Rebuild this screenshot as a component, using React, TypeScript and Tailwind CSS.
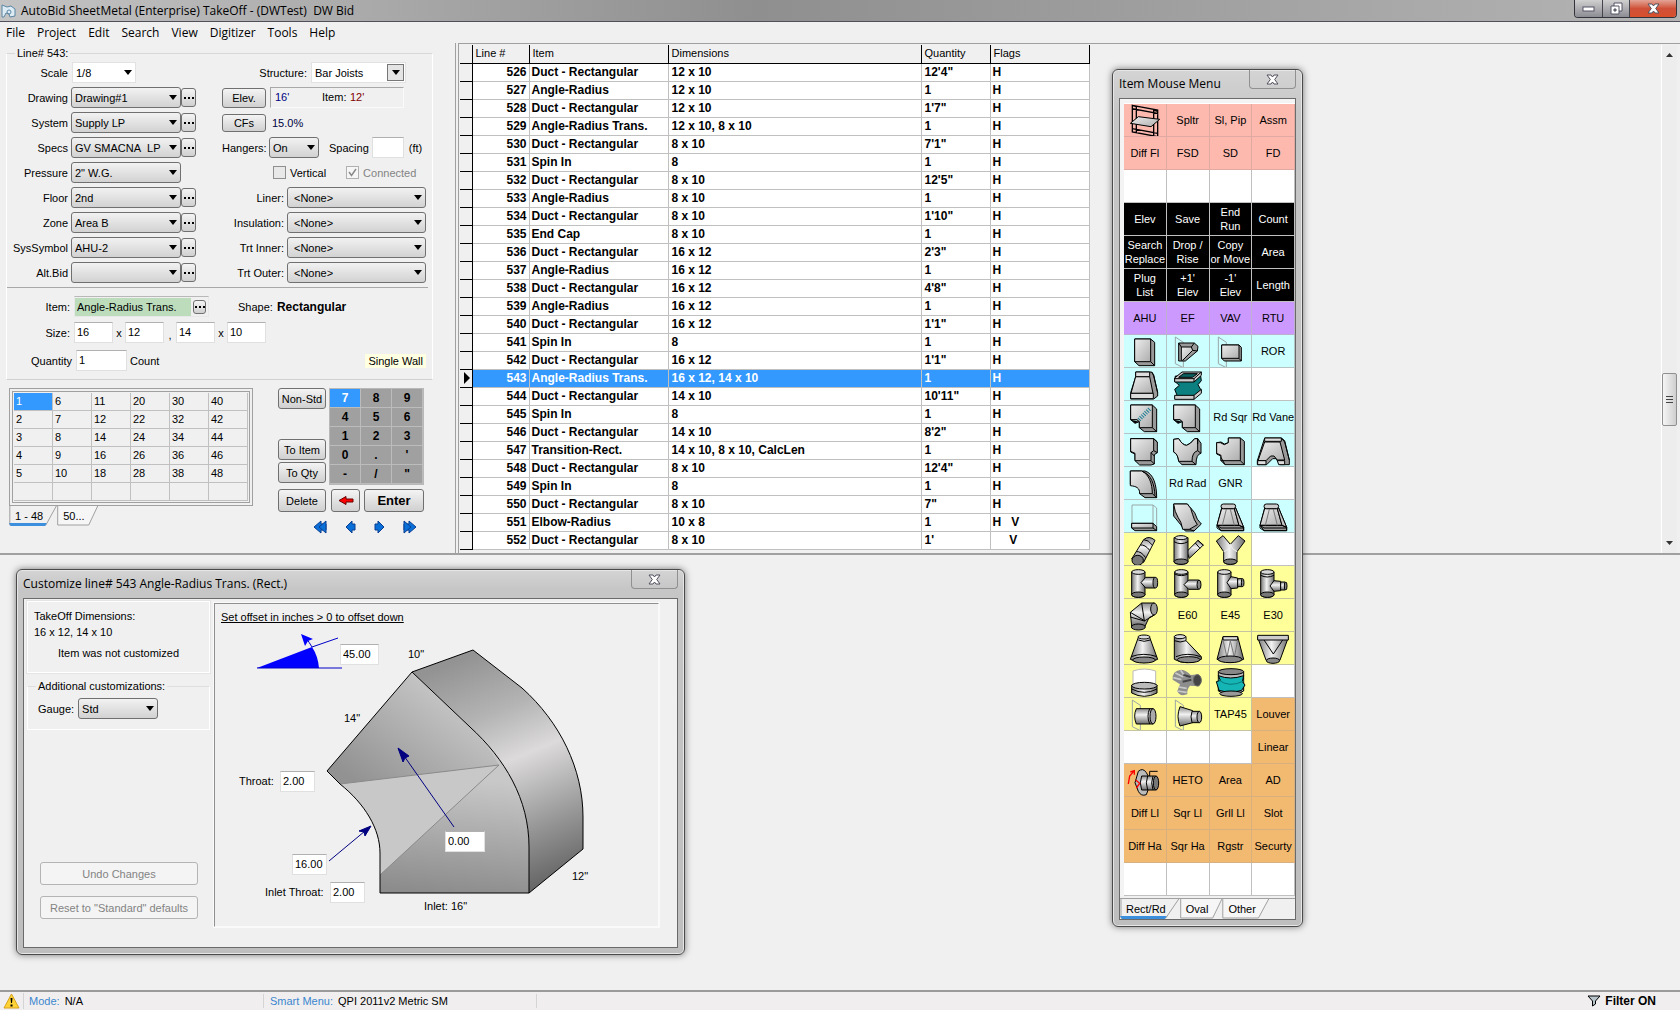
import { useState } from 'react';
import type { ReactNode } from 'react';
import clsx from 'clsx';

const menus = ['File', 'Project', 'Edit', 'Search', 'View', 'Digitizer', 'Tools', 'Help'];

const leftFields = [
  { id: 'drawing', label: 'Drawing', value: 'Drawing#1', more: true },
  { id: 'system', label: 'System', value: 'Supply LP', more: true },
  { id: 'specs', label: 'Specs', value: 'GV SMACNA\u00a0 LP', more: true },
  { id: 'pressure', label: 'Pressure', value: '2" W.G.', more: false },
  { id: 'floor', label: 'Floor', value: '2nd', more: true },
  { id: 'zone', label: 'Zone', value: 'Area B', more: true },
  { id: 'syssymbol', label: 'SysSymbol', value: 'AHU-2', more: true },
  { id: 'altbid', label: 'Alt.Bid', value: '', more: true },
];

const rightFields = [
  { id: 'liner', label: 'Liner:' },
  { id: 'insulation', label: 'Insulation:' },
  { id: 'trt-inner', label: 'Trt Inner:' },
  { id: 'trt-outer', label: 'Trt Outer:' },
];

const DUCT = 'Duct - Rectangular';

const rows: [number, string, string, string, string][] = [
  [526, DUCT, '12 x 10', `12'4"`, 'H'],
  [527, 'Angle-Radius', '12 x 10', '1', 'H'],
  [528, DUCT, '12 x 10', `1'7"`, 'H'],
  [529, 'Angle-Radius Trans.', '12 x 10, 8 x 10', '1', 'H'],
  [530, DUCT, '8 x 10', `7'1"`, 'H'],
  [531, 'Spin In', '8', '1', 'H'],
  [532, DUCT, '8 x 10', `12'5"`, 'H'],
  [533, 'Angle-Radius', '8 x 10', '1', 'H'],
  [534, DUCT, '8 x 10', `1'10"`, 'H'],
  [535, 'End Cap', '8 x 10', '1', 'H'],
  [536, DUCT, '16 x 12', `2'3"`, 'H'],
  [537, 'Angle-Radius', '16 x 12', '1', 'H'],
  [538, DUCT, '16 x 12', `4'8"`, 'H'],
  [539, 'Angle-Radius', '16 x 12', '1', 'H'],
  [540, DUCT, '16 x 12', `1'1"`, 'H'],
  [541, 'Spin In', '8', '1', 'H'],
  [542, DUCT, '16 x 12', `1'1"`, 'H'],
  [543, 'Angle-Radius Trans.', '16 x 12, 14 x 10', '1', 'H'],
  [544, DUCT, '14 x 10', `10'11"`, 'H'],
  [545, 'Spin In', '8', '1', 'H'],
  [546, DUCT, '14 x 10', `8'2"`, 'H'],
  [547, 'Transition-Rect.', '14 x 10, 8 x 10, CalcLen', '1', 'H'],
  [548, DUCT, '8 x 10', `12'4"`, 'H'],
  [549, 'Spin In', '8', '1', 'H'],
  [550, DUCT, '8 x 10', '7"', 'H'],
  [551, 'Elbow-Radius', '10 x 8', '1', 'H   V'],
  [552, DUCT, '8 x 10', `1'`, '     V'],
];

const sizes = [
  ['1', '6', '11', '20', '30', '40'],
  ['2', '7', '12', '22', '32', '42'],
  ['3', '8', '14', '24', '34', '44'],
  ['4', '9', '16', '26', '36', '46'],
  ['5', '10', '18', '28', '38', '48'],
  ['', '', '', '', '', ''],
];

const keys = ['7', '8', '9', '4', '5', '6', '1', '2', '3', '0', '.', "'", '-', '/', '"'];

/* ---------- fitting icons, drawn on a 129 x 99 cell ---------- */

const G = 'url(#sheet)';
const R = 'url(#round)';
const H = 'url(#roundH)';
const D = '#999999';

const pane = <path d="M28 6L52 22V98L28 86Z" fill="none" stroke="#9aa5a5" />;
const tee = (
  <>
    <path d="M26 18V86A20 8 0 0 0 66 86V18Z" fill={R} />
    <ellipse cx="46" cy="18" rx="20" ry="7" fill="#d8d8d8" />
    <ellipse cx="46" cy="86" rx="20" ry="8" fill="#777" />
  </>
);
const sqToRound = (
  <>
    <path d="M38 24L24 76L36 92H104V82L80 24Z" fill={D} />
    <path d="M38 26L24 76H90L76 26Z" fill={G} />
    <path d="M76 26L90 76L104 82L80 24Z" fill="#c4c4c4" />
    <path d="M24 76V84L36 92H104V82L90 76H24L36 84H104" fill="none" />
    <path d="M52 28L40 76M64 28L76 76" fill="none" stroke="#777" />
    <rect x="36" y="12" width="44" height="14" rx="7" fill="#ccc" />
  </>
);
const elbow = (
  <>
    <path d="M23 12H88L101 24V92H64L49 80V62L42 56H23Z" fill={D} />
    <path d="M23 12H88V80H49V62L42 56H23Z" fill={G} />
    <path d="M88 80L101 92M23 56L36 67L49 62" />
  </>
);

const icons: Record<string, ReactNode> = {
  damper: (
    <>
      <path d="M28 4L40 8V86L28 84ZM92 18L104 22V98L92 96ZM28 4L104 18V28L28 14ZM28 74L104 88V98L28 84Z" fill="#fbb8ae" strokeWidth="4" />
      <path d="M22 58L46 38L110 46L84 68Z" fill={G} />
    </>
  ),
  duct: (
    <>
      <path d="M35 12H83L95 22V92H48L35 80Z" fill={D} />
      <path d="M35 12H83V80H35Z" fill={G} />
      <path d="M83 80L95 92" />
    </>
  ),
  boot: (
    <>
      {pane}
      <path d="M38 24H85L96 34L94 48L58 78H38Z" fill={D} />
      <path d="M46 36H76L80 46L50 76H46Z" fill={G} />
      <path d="M38 24L46 36M85 24L76 36M80 46L94 48" />
    </>
  ),
  tapBox: (
    <>
      {pane}
      <path d="M38 30H90L97 37V78H46L38 70Z" fill={D} />
      <path d="M38 30H90V70H38Z" fill={G} />
      <path d="M90 70L97 78" />
    </>
  ),
  transition: (
    <>
      <path d="M38 12H86L92 20L104 74V84L92 93H23V74L38 26Z" fill={D} />
      <path d="M38 26L24 76H90L80 26Z" fill={G} />
      <path d="M38 12H80V26H38ZM23 76H91V92H23Z" fill="#ddd" />
      <path d="M86 12L92 24L104 74" fill="none" />
    </>
  ),
  flexSquare: (
    <>
      <path d="M26 40L40 52L26 64L34 84H84L106 68L96 50L106 38L104 24H28Z" fill="#0c8080" />
      <path d="M26 30L48 12H106V22L84 42H26Z" fill="#ccc" />
      <path d="M38 28L52 17H94L80 28Z" fill="#0a6262" />
      <path d="M26 32H84V42M84 32L106 12" fill="none" />
      <path d="M26 82H84L106 64V76L84 94H26Z" fill="#ccc" />
      <path d="M84 82V94" />
    </>
  ),
  elbowVaned: (
    <>
      {elbow}
      <path d="M48 56L80 24" stroke="#1d7f95" strokeWidth="13" strokeDasharray="3 4" />
    </>
  ),
  elbowSquare: elbow,
  teeSquare: (
    <>
      <path d="M23 14H92L103 24V56L94 62V90L84 93H50L36 80V60L23 54Z" fill={D} />
      <path d="M23 14H92V50L84 56V80H36V58L23 52Z" fill={G} />
      <path d="M92 14L103 24M84 80L94 90M92 50L103 56M84 56L94 66" />
    </>
  ),
  yBranch: (
    <>
      <path d="M23 16L38 14Q50 34 62 34Q74 30 86 14H95L105 28V58Q90 60 90 92H48L38 82Q36 60 23 54Z" fill={D} />
      <path d="M23 16L38 14Q50 34 62 34Q74 30 86 14H95V50Q78 54 78 82H38Q36 60 23 54Z" fill={G} />
      <path d="M78 82L90 92M95 50L105 58M95 14V30" />
    </>
  ),
  stepTee: (
    <>
      <path d="M23 26L36 24L46 30L58 26V12H94L106 22V92H48L36 80V66L23 60Z" fill={D} />
      <path d="M23 26H34L46 32L58 26V12H94V80H36V64L23 58Z" fill={G} />
      <path d="M94 80L106 92M36 70L48 92" />
    </>
  ),
  pants: (
    <>
      <path d="M38 12H88L98 20L112 78V92H84L72 74H62L44 92H16V80Z" fill={D} />
      <path d="M38 24H84L98 78H76L66 66H56L42 80H18Z" fill={G} />
      <path d="M38 12H88V22H38ZM17 80H42V92H17ZM76 80H98V92H80Z" fill="#ddd" />
      <path d="M88 12L98 24L112 78" fill="none" />
    </>
  ),
  radius: (
    <>
      <path d="M22 12H66C92 20 101 54 101 92H66L50 80V62L22 52Z" fill={D} />
      <path d="M22 12H56C78 22 88 50 88 80H50C50 62 40 58 22 56Z" fill={G} />
      <path d="M88 80L101 92M60 14C84 24 94 50 96 86" fill="none" />
    </>
  ),
  endCap: (
    <>
      <path d="M27 70V15H90L101 24V80M90 15V70" fill="none" stroke="#9aa5a5" />
      <path d="M26 70H90L101 80V92H36L26 84Z" fill={D} />
      <path d="M26 70H90V84H26Z" fill={G} />
      <path d="M90 84L101 92" />
    </>
  ),
  angle: (
    <>
      <path d="M23 12H64L86 38Q92 60 106 72L84 93H58L44 74L23 48Z" fill={D} />
      <path d="M23 12H64Q76 22 80 44Q84 60 94 74L70 88H50Q46 64 36 52Q26 36 23 12Z" fill={G} />
      <path d="M70 88L84 93" />
    </>
  ),
  sqRoundA: sqToRound,
  sqRoundB: sqToRound,
  pipe: (
    <>
      <path d="M26 78L62 20Q78 6 96 22L62 88Z" fill={H} />
      <ellipse cx="44" cy="82" rx="17" ry="15" fill="#777" />
      <path d="M40 56Q54 54 68 74M52 36Q66 34 80 52M62 20Q76 20 88 36" fill="none" />
    </>
  ),
  lateral: (
    <>
      <path d="M62 56L96 22L112 36L70 76Z" fill={H} />
      <path d="M88 30L102 46M96 22L112 38" />
      <path d="M24 14V86A21 8 0 0 0 66 86V14Z" fill={R} />
      <ellipse cx="45" cy="14" rx="18" ry="6" fill="#ddd" />
      <path d="M24 26Q45 38 66 26" fill="none" />
      <ellipse cx="45" cy="86" rx="21" ry="8" fill="#777" />
    </>
  ),
  wye: (
    <>
      <path d="M22 24L42 8L64 34L88 8L108 24L84 56V86A20 8 0 0 1 44 86V56Z" fill={R} />
      <path d="M44 56Q62 50 64 34Q68 50 84 56" fill="none" stroke="#eee" />
      <ellipse cx="64" cy="86" rx="20" ry="8" fill="#777" />
    </>
  ),
  teeRound: (
    <>
      {tee}
      <path d="M54 50L68 34H96V66H68Z" fill={H} />
      <ellipse cx="97" cy="50" rx="7" ry="16" fill="#888" />
    </>
  ),
  teeCap: (
    <>
      {tee}
      <path d="M26 24Q46 34 66 24" fill="none" />
      <path d="M54 56L68 42H98V70H68Z" fill={H} />
      <ellipse cx="99" cy="56" rx="6" ry="14" fill="#888" />
    </>
  ),
  teeReduce: (
    <>
      {tee}
      <path d="M54 50L66 32L86 36V66L66 68Z" fill={H} />
      <path d="M86 38H100V62H86Z" fill={H} />
      <ellipse cx="101" cy="50" rx="4" ry="12" fill="#888" />
    </>
  ),
  teeReduceCap: (
    <>
      {tee}
      <path d="M26 28Q46 38 66 28" fill="none" />
      <path d="M54 60L66 44L86 46V74L66 76Z" fill={H} />
      <path d="M86 48H100V72H86Z" fill={H} />
      <ellipse cx="101" cy="60" rx="4" ry="12" fill="#888" />
    </>
  ),
  elbowRound: (
    <>
      <path d="M22 40L56 12H94V48L78 56L66 82H26Z" fill={H} />
      <path d="M22 40L66 66M22 54L64 66L56 12M64 66L94 48" fill="none" />
      <ellipse cx="93" cy="30" rx="10" ry="18" fill="#999" />
      <ellipse cx="46" cy="84" rx="21" ry="9" fill="#777" />
    </>
  ),
  cone: (
    <>
      <path d="M46 16L22 82Q62 102 104 82L80 16Z" fill={R} />
      <ellipse cx="63" cy="15" rx="18" ry="6" fill="#ddd" />
      <path d="M46 24Q63 32 82 24M24 74Q62 60 102 74" fill="none" />
      <ellipse cx="63" cy="84" rx="34" ry="9" fill="#888" />
    </>
  ),
  coneOffset: (
    <>
      <path d="M25 14V82Q60 102 106 82V74L60 26V14Z" fill={R} />
      <ellipse cx="42" cy="14" rx="17" ry="6" fill="#ddd" />
      <path d="M25 26Q42 34 60 26M30 74Q64 60 104 74" fill="none" />
      <ellipse cx="68" cy="83" rx="34" ry="9" fill="#888" />
    </>
  ),
  coneFacet: (
    <>
      <path d="M42 14H86L104 82Q62 100 24 82Z" fill={R} />
      <path d="M42 14H86V24H42Z" fill="#ddd" />
      <path d="M42 24L54 76L64 26L76 76L86 24" fill="none" stroke="#777" />
      <ellipse cx="63" cy="82" rx="36" ry="10" fill="#888" />
    </>
  ),
  coneDown: (
    <>
      <path d="M17 16L22 30L42 84Q62 100 84 84L104 30L109 16Z" fill={R} />
      <path d="M17 10H109V24H17Z" fill="#ccc" />
      <path d="M36 24L64 66L92 24" fill="none" />
      <ellipse cx="63" cy="86" rx="20" ry="8" fill="#888" />
    </>
  ),
  capRound: (
    <>
      <path d="M30 60V18Q64 6 98 18V60" fill="#fff" stroke="#bbb" />
      <path d="M26 60V84Q64 104 102 84V60Z" fill={R} />
      <ellipse cx="64" cy="62" rx="38" ry="10" fill="#bbb" />
      <path d="M26 72Q64 92 102 72" fill="none" />
    </>
  ),
  flexElbow: (
    <>
      <path d="M20 44Q18 16 46 14Q62 16 74 30L98 28Q108 44 100 64L72 62Q62 74 64 88Q40 96 34 78L42 58Z" fill="#8d8d8d" stroke="none" />
      <path d="M22 38L46 44M28 24L52 36M44 16L58 36M34 78L62 82M38 66L62 70" stroke="#c9c9c9" strokeWidth="5" />
      <ellipse cx="94" cy="46" rx="12" ry="17" fill="#444" stroke="#666" />
      <path d="M50 50L76 44M52 30L74 36" stroke="#444" strokeWidth="6" />
    </>
  ),
  flexRound: (
    <>
      <path d="M28 20V78Q64 100 104 78V20Z" fill="#bbb" />
      <path d="M28 32Q64 46 104 32L100 50L108 60L98 76Q64 86 30 76L22 50L34 46Z" fill="#16b5b5" />
      <path d="M28 44Q60 70 104 48" fill="none" stroke="#087a7a" />
      <ellipse cx="66" cy="20" rx="38" ry="9" fill="#888" />
      <ellipse cx="66" cy="86" rx="34" ry="8" fill="#999" />
    </>
  ),
  tapRound: (
    <>
      {pane}
      <path d="M40 32H90V78H40Q30 54 40 32Z" fill={H} />
      <ellipse cx="90" cy="55" rx="9" ry="23" fill="#aaa" />
      <path d="M80 32Q70 54 80 78" fill="none" />
    </>
  ),
  tapCone: (
    <>
      {pane}
      <path d="M42 26L80 38V74L42 84Q30 56 42 26Z" fill={H} />
      <path d="M78 40H100V74H78Q72 56 78 40Z" fill={H} />
      <ellipse cx="100" cy="57" rx="7" ry="17" fill="#aaa" />
    </>
  ),
  diffuser: (
    <>
      <path d="M46 22Q60 10 70 26L78 40V70L70 92Q54 98 46 82L36 56Z" fill="#bbb" />
      <path d="M56 36H98V78H56Q48 56 56 36Z" fill={H} />
      <path d="M74 36Q66 56 74 78M90 36Q82 56 90 78" fill="none" />
      <ellipse cx="99" cy="57" rx="8" ry="21" fill="#777" />
      <path d="M80 36V22H104" fill="none" />
      <path d="M16 60L20 36L32 22M22 24L34 20L34 32M38 48L50 58L40 72" fill="none" stroke="red" strokeWidth="4" />
    </>
  ),
};

type Tone = 'p' | 'w' | 'k' | 'v' | 'c' | 'y' | 'o';

const tones: Record<Tone, string> = {
  p: 'bg-[#fdb9ae] border-[#e0aaa2]',
  w: 'bg-white border-[#c0c0c0]',
  k: 'bg-black text-white border-[#c0c0c0]',
  v: 'bg-[#cc99ff] border-[#c0b0d0]',
  c: 'bg-[#ccffff] border-[#b4c4c4]',
  y: 'bg-[#ffff99] border-[#c4c4a0]',
  o: 'bg-[#f2b971] border-[#d8b080]',
};

// "#name" draws an icon, anything else is a caption
const palette: [string, string[]][] = [
  ['pppp', ['#damper', 'Spltr', 'Sl, Pip', 'Assm']],
  ['pppp', ['Diff Fl', 'FSD', 'SD', 'FD']],
  ['wwww', ['', '', '', '']],
  ['kkkk', ['Elev', 'Save', 'End\nRun', 'Count']],
  ['kkkk', ['Search\nReplace', 'Drop /\nRise', 'Copy\nor Move', 'Area']],
  ['kkkk', ['Plug\nList', "+1'\nElev", "-1'\nElev", 'Length']],
  ['vvvv', ['AHU', 'EF', 'VAV', 'RTU']],
  ['cccc', ['#duct', '#boot', '#tapBox', 'ROR']],
  ['ccww', ['#transition', '#flexSquare', '', '']],
  ['cccc', ['#elbowVaned', '#elbowSquare', 'Rd Sqr', 'Rd Vane']],
  ['cccc', ['#teeSquare', '#yBranch', '#stepTee', '#pants']],
  ['cccw', ['#radius', 'Rd Rad', 'GNR', '']],
  ['cccc', ['#endCap', '#angle', '#sqRoundA', '#sqRoundB']],
  ['yyyw', ['#pipe', '#lateral', '#wye', '']],
  ['yyyy', ['#teeRound', '#teeCap', '#teeReduce', '#teeReduceCap']],
  ['yyyy', ['#elbowRound', 'E60', 'E45', 'E30']],
  ['yyyy', ['#cone', '#coneOffset', '#coneFacet', '#coneDown']],
  ['yyyw', ['#capRound', '#flexElbow', '#flexRound', '']],
  ['yyyo', ['#tapRound', '#tapCone', 'TAP45', 'Louver']],
  ['wwwo', ['', '', '', 'Linear']],
  ['oooo', ['#diffuser', 'HETO', 'Area', 'AD']],
  ['oooo', ['Diff Ll', 'Sqr Ll', 'Grll Ll', 'Slot']],
  ['oooo', ['Diff Ha', 'Sqr Ha', 'Rgstr', 'Securty']],
  ['wwww', ['', '', '', '']],
];

function Caret({ className }: { className?: string }) {
  return (
    <svg viewBox="0 0 8 5" className={clsx('h-[5px] w-2', className)} aria-hidden>
      <path d="M0 0H8L4 5Z" fill="#000" />
    </svg>
  );
}

interface ComboProps {
  id: string;
  value: string;
  className?: string;
  flat?: boolean;
  boxed?: boolean;
  indent?: boolean;
}

function Combo({ id, value, className, flat, boxed, indent }: ComboProps) {
  return (
    <span className={clsx('relative block h-[21px]', className)}>
      <select
        id={id}
        defaultValue={value}
        className={clsx(
          'block h-full w-full appearance-none whitespace-pre pr-4 outline-none',
          indent ? 'pl-1.5' : 'pl-[3px]',
          flat
            ? 'border border-[#e2e2e2] bg-white'
            : 'rounded-[3px] border border-[#707070] bg-linear-to-b from-[#f2f2f2] to-[#d2d2d2]'
        )}
      >
        <option>{value}</option>
      </select>
      {boxed ? (
        <span className="pointer-events-none absolute top-0.5 right-0.5 flex size-[17px] items-center justify-center border border-[#777] bg-[#e4e4e4]">
          <Caret />
        </span>
      ) : (
        <Caret className="pointer-events-none absolute top-2 right-1" />
      )}
    </span>
  );
}

function PushButton({ className, children, ...rest }: React.ComponentProps<'button'>) {
  return (
    <button
      type="button"
      className={clsx(
        'flex items-center justify-center rounded-[3px] border border-[#707070] bg-linear-to-b from-[#f4f4f4] to-[#d0d0d0] whitespace-nowrap',
        className
      )}
      {...rest}
    >
      {children}
    </button>
  );
}

function MoreButton({ label }: { label: string }) {
  return (
    <PushButton className="h-[19px] w-[15px]" aria-label={label}>
      <svg viewBox="0 0 10 2" className="h-0.5 w-2.5" aria-hidden>
        <path d="M0 0H2V2H0ZM4 0H6V2H4ZM8 0H10V2H8Z" />
      </svg>
    </PushButton>
  );
}

function TextBox({ className, ...rest }: React.ComponentProps<'input'>) {
  return (
    <input
      type="text"
      className={clsx(
        'h-[21px] border border-[#e0e0e0] border-t-[#b0b0b0] bg-white px-0.5 pb-0.5 outline-none',
        className
      )}
      {...rest}
    />
  );
}

function Tab({ children, active }: { children: ReactNode; active?: boolean }) {
  return (
    <button type="button" role="tab" aria-selected={!!active} className="relative h-5 pr-3.5 pl-1.5">
      <svg
        viewBox="0 0 60 20"
        preserveAspectRatio="none"
        className="absolute inset-0 h-full w-full"
        aria-hidden
      >
        <path d="M1 0V19H46L59 0" fill={active ? '#f0f0f0' : '#f6f6f6'} stroke="#a0a0a0" vectorEffect="non-scaling-stroke" />
        {active && <path d="M0 17H47L45 20H2Z" fill="#3b8fdd" />}
      </svg>
      <span className="relative">{children}</span>
    </button>
  );
}

function TitleBar() {
  return (
    <header className="flex h-[22px] shrink-0 items-center border-b border-[#50505a] bg-linear-to-r from-[#c4c4c4] via-[#8f8f8f] via-45% to-[#b4b4b4] pl-px font-['Open_Sans',sans-serif] text-xs">
      <svg viewBox="0 0 16 16" className="mr-1 size-4" aria-hidden>
        <path d="M1 2L6 4L10 3L14 6V13L9 14L8 11L5 10L3 14H1Z" fill="#dcebf4" stroke="#5c86a2" />
        <circle cx="8" cy="9" r="2" fill="none" stroke="#5c86a2" />
      </svg>
      <h1 className="whitespace-pre">AutoBid SheetMetal (Enterprise) TakeOff - (DWTest)  DW Bid</h1>
      <div className="mr-[3px] ml-auto flex h-[18px] self-start overflow-hidden rounded-b border border-t-0 border-[#33333c]">
        <button type="button" aria-label="Minimize" className="flex w-7 items-center justify-center border-r border-[#44444c] bg-linear-to-b from-[#d0d0d0] to-[#8c8c94]">
          <svg viewBox="0 0 13 6" className="h-1.5 w-[13px]"><rect x="1" y="1" width="11" height="4" fill="#fff" stroke="#555566" /></svg>
        </button>
        <button type="button" aria-label="Restore" className="flex w-[27px] items-center justify-center border-r border-[#44444c] bg-linear-to-b from-[#d0d0d0] to-[#8c8c94]">
          <svg viewBox="0 0 13 13" className="size-[13px]" fill="#fff" stroke="#555566">
            <path d="M4 1H12V9H4Z" />
            <path d="M1 4H9V12H1Z" />
            <path d="M4 7H6V9H4Z" fill="#888" />
          </svg>
        </button>
        <button type="button" aria-label="Close" className="flex w-[46px] items-center justify-center bg-linear-to-b from-[#e2a496] via-[#cf5038] to-[#d8502c]">
          <CloseGlyph />
        </button>
      </div>
    </header>
  );
}

function CloseGlyph() {
  return (
    <svg viewBox="0 0 13 11" className="h-[11px] w-[13px]" aria-hidden>
      <path d="M1 1H5L6.5 3L8 1H12L8.7 5.5L12 10H8L6.500 8L5 10H1L4.300 5.500Z" fill="#fff" stroke="#50505e" />
    </svg>
  );
}

function EntryForm() {
  return (
    <fieldset className="mr-[22px] ml-1.5 border border-t-[#d8d8d8] border-white border-b-[#d0d0d0]">
      <legend className="ml-2 h-3.5 px-0.5 leading-[14px]">Line# 543:</legend>
      <div className="flex justify-between pr-1.5">
        <div>
          <div className="flex h-[25px] items-center">
            <label htmlFor="scale" className="mr-1 w-[61px] text-right">Scale</label>
            <Combo id="scale" value="1/8" flat className="w-16" />
          </div>
          {leftFields.map((field) => (
            <div key={field.id} className="flex h-[25px] items-center">
              <label htmlFor={field.id} className="mr-[3px] w-[61px] text-right">{field.label}</label>
              <Combo id={field.id} value={field.value} className="w-[110px]" />
              {field.more && <MoreButton label={`${field.label} list`} />}
            </div>
          ))}
        </div>
        <div className="w-[204px]">
          <div className="flex h-[25px] items-center justify-end pr-5">
            <label htmlFor="structure" className="mr-1">Structure:</label>
            <Combo id="structure" value="Bar Joists" flat boxed className="w-[95px]" />
          </div>
          <div className="flex h-[25px] items-center gap-1">
            <PushButton className="h-5 w-11">Elev.</PushButton>
            <p className="flex h-[21px] w-[134px] border border-[#fafafa] border-t-[#a8a8a8] border-l-[#a8a8a8] pl-1 leading-[18px]">
              <span className="w-[47px] text-[#000080]">16'</span>
              <span className="w-7">Item:</span>
              <span className="text-[#800000]">12'</span>
            </p>
          </div>
          <div className="flex h-[25px] items-center gap-1.5">
            <PushButton className="h-[18px] w-11">CFs</PushButton>
            <span className="text-[#000040]">15.0%</span>
          </div>
          <div className="flex h-[25px] items-center">
            <label htmlFor="hangers" className="mr-[3px] w-11 text-right">Hangers:</label>
            <Combo id="hangers" value="On" className="w-[50px]" />
            <label htmlFor="spacing" className="mr-[3px] ml-2.5">Spacing</label>
            <TextBox id="spacing" className="w-8" />
            <span className="ml-[5px]">(ft)</span>
          </div>
          <div className="flex h-[25px] items-center pl-[51px]">
            <label className="flex items-center gap-1">
              <input type="checkbox" className="size-[13px] appearance-none border border-[#8e8f8f] bg-[#e8e8e8]" />
              Vertical
            </label>
            <label className="relative ml-5 flex items-center gap-1 text-[#838383]">
              <input type="checkbox" disabled defaultChecked className="size-[13px] appearance-none border border-[#b0b0b0] bg-[#f6f6f6]" />
              <svg viewBox="0 0 13 13" className="pointer-events-none absolute left-0 size-[13px]" aria-hidden>
                <path d="M3 6L5.500 9.500L10 3" fill="none" stroke="#8a8a8a" strokeWidth="1.500" />
              </svg>
              Connected
            </label>
          </div>
          {rightFields.map((field) => (
            <div key={field.id} className="flex h-[25px] items-center justify-end">
              <label htmlFor={field.id} className="mr-[3px]">{field.label}</label>
              <Combo id={field.id} value="<None>" indent className="w-[139px]" />
            </div>
          ))}
        </div>
      </div>

      <hr className="mt-0.5 mr-1 border-[#a8a8a8]" />

      <div className="pt-2 pb-2">
        <div className="flex h-[21px] items-center">
          <label htmlFor="item" className="mr-1 w-[63px] text-right">Item:</label>
          <div className="flex h-[21px] w-[135px] items-center gap-0.5 border border-[#e8e8e8] border-t-[#b8b8b8]">
            <input id="item" type="text" defaultValue="Angle-Radius Trans." className="h-[18px] w-[116px] bg-[#bcdcbc] px-0.5 outline-none" />
            <PushButton className="h-3.5 w-[13px]" aria-label="Item list">
              <svg viewBox="0 0 10 2" className="h-0.5 w-2.5" aria-hidden><path d="M0 0H2V2H0ZM4 0H6V2H4ZM8 0H10V2H8Z" /></svg>
            </PushButton>
          </div>
          <p className="ml-[29px]">Shape:</p>
          <strong className="ml-1 text-xs">Rectangular</strong>
        </div>
        <div className="mt-[5px] flex h-[21px] items-center">
          <label htmlFor="size-a" className="mr-1 w-[63px] text-right">Size:</label>
          <TextBox id="size-a" defaultValue="16" className="w-[39px]" />
          <span className="w-3 text-center">x</span>
          <TextBox aria-label="Height" defaultValue="12" className="w-[39px]" />
          <span className="w-3 pt-1 text-center">,</span>
          <TextBox aria-label="End width" defaultValue="14" className="w-[39px]" />
          <span className="w-3 text-center">x</span>
          <TextBox aria-label="End height" defaultValue="10" className="w-[39px]" />
        </div>
        <div className="mt-[7px] flex h-[21px] items-center">
          <label htmlFor="quantity" className="mr-1 w-[65px] text-right">Quantity</label>
          <TextBox id="quantity" defaultValue="1" className="w-[51px]" />
          <span className="ml-[3px]">Count</span>
          <span className="mr-1.5 ml-auto bg-[#ffffe1] px-[3px]">Single Wall</span>
        </div>
      </div>
    </fieldset>
  );
}

function NavArrow({ label, double, flip }: { label: string; double?: boolean; flip?: boolean }) {
  return (
    <button type="button" aria-label={label}>
      <svg viewBox="0 0 15 14" className="h-3.5 w-[15px]" aria-hidden>
        <g transform={flip ? 'translate(15 0) scale(-1 1)' : undefined} fill="#0b6fd8" stroke="#0a3f92">
          {double && <path d="M8 4V1L1 7L8 13V10H13V4Z" />}
          {double ? <path d="M13 4V1L6 7L13 13V10Z" /> : <path d="M9 4V1L3 7L9 13V10H12V4Z" />}
        </g>
      </svg>
    </button>
  );
}

function SizePad() {
  const [size, setSize] = useState('1');
  const [key, setKey] = useState('7');

  return (
    <div className="mt-2 mr-[31px] ml-[9px] flex items-start justify-between">
      <div>
        <div className="border border-[#a0a0a0] p-0.5">
          <div className="grid grid-cols-[repeat(6,39px)] border border-[#a0a0a0] p-px">
            {sizes.flat().map((value, i) => (
              <button
                key={i}
                type="button"
                onClick={() => setSize(value)}
                className={clsx(
                  'h-[18px] border-r border-b border-[#c0c0c0] pl-0.5 text-left leading-[17px]',
                  value && value === size && 'bg-[#3399ff] text-white'
                )}
              >
                {value}
              </button>
            ))}
          </div>
        </div>
        <div role="tablist" className="flex">
          <Tab active>1 - 48</Tab>
          <Tab>50...</Tab>
        </div>
      </div>

      <div className="grid grid-cols-[48px_95px] gap-x-[3px]">
        <div className="flex flex-col">
          <PushButton className="h-[21px]">Non-Std</PushButton>
          <PushButton className="mt-[30px] h-[21px]">To Item</PushButton>
          <PushButton className="mt-0.5 h-[21px]">To Qty</PushButton>
        </div>
        <div className="grid grid-cols-3 border border-[#b8b8b8] text-xs font-bold">
          {keys.map((k) => (
            <button
              key={k}
              type="button"
              onClick={() => setKey(k)}
              className={clsx(
                'h-[19px] border-r border-b border-[#bcbcbc] leading-4',
                k === key ? 'bg-[#3399ff] text-white' : 'bg-[#a0a0a0]'
              )}
            >
              {k}
            </button>
          ))}
        </div>
        <PushButton className="mt-1 h-[23px]">Delete</PushButton>
        <div className="mt-1 flex gap-1 pl-0.5">
          <PushButton className="h-[23px] w-[29px]" aria-label="Backspace">
            <svg viewBox="0 0 16 9" className="h-[9px] w-4" aria-hidden>
              <path d="M1 4.500L8 0.500V3H15V6H8V8.500Z" fill="#f00" stroke="#600" />
            </svg>
          </PushButton>
          <PushButton className="h-[23px] flex-1 text-[13px] font-bold">Enter</PushButton>
        </div>
        <div className="col-span-2 mt-2 flex justify-between pr-[7px] pl-[35px]">
          <NavArrow label="First" double />
          <NavArrow label="Previous" />
          <NavArrow label="Next" flip />
          <NavArrow label="Last" double flip />
        </div>
      </div>
    </div>
  );
}

function LineTable() {
  const [current, setCurrent] = useState(543);
  const th = 'border-r border-b border-black bg-[#f0f0f0] pl-[3px] text-left font-normal';

  return (
    <table className="w-[629px] table-fixed border-collapse text-xs">
      <colgroup>
        <col className="w-3" />
        <col className="w-[57px]" />
        <col className="w-[139px]" />
        <col className="w-[253px]" />
        <col className="w-[69px]" />
        <col className="w-[99px]" />
      </colgroup>
      <thead className="text-[11px]">
        <tr className="h-[18px]">
          <th className={th} />
          <th className={th}>Line #</th>
          <th className={th}>Item</th>
          <th className={th}>Dimensions</th>
          <th className={th}>Quantity</th>
          <th className={th}>Flags</th>
        </tr>
      </thead>
      <tbody className="font-bold">
        {rows.map(([line, item, dims, qty, flags]) => {
          const td = 'border-r border-b border-[#c0c0c0] py-0 leading-[17px] whitespace-pre';
          return (
            <tr
              key={line}
              onClick={() => setCurrent(line)}
              className={clsx('h-[18px]', line === current ? 'bg-[#3399ff] text-white' : 'bg-white')}
            >
              <td className="border-r border-b border-black bg-[#f0f0f0] p-0">
                {line === current && (
                  <svg viewBox="0 0 6 12" className="ml-1 h-3 w-1.5" aria-hidden><path d="M0 0L6 6L0 12Z" /></svg>
                )}
              </td>
              <td className={clsx(td, 'pr-0.5 text-right')}>{line}</td>
              <td className={clsx(td, 'pl-0.5')}>{item}</td>
              <td className={clsx(td, 'pl-[3px]')}>{dims}</td>
              <td className={clsx(td, 'pl-[3px]')}>{qty}</td>
              <td className={clsx(td, 'pl-0.5')}>{flags}</td>
            </tr>
          );
        })}
      </tbody>
    </table>
  );
}

function ScrollBar() {
  return (
    <div className="mr-[3px] ml-auto flex w-4 flex-col items-center border-l border-white bg-[#ededed] py-2">
      <svg viewBox="0 0 7 4" className="h-1 w-[7px]" aria-hidden><path d="M0 4L3.500 0L7 4Z" fill="#333" /></svg>
      <div className="grow-[316]" />
      <div className="flex h-[53px] w-[15px] flex-col items-center justify-center gap-0.5 rounded-xs border border-[#909090] bg-linear-to-r from-[#f6f6f6] to-[#cfcfcf]">
        <i className="h-px w-[7px] bg-[#444]" />
        <i className="h-px w-[7px] bg-[#444]" />
        <i className="h-px w-[7px] bg-[#444]" />
      </div>
      <div className="grow-[115]" />
      <svg viewBox="0 0 7 4" className="h-1 w-[7px]" aria-hidden><path d="M0 0L3.500 4L7 0Z" fill="#333" /></svg>
    </div>
  );
}

function ToolWindow({ title, className, children }: { title: string; className: string; children: ReactNode }) {
  return (
    <section
      className={clsx(
        'absolute flex flex-col rounded-md border border-[#4a4a4a] bg-linear-to-b from-[#d4d4d4] via-[#c6c6c6] via-5% to-[#bebebe] px-1.5 pb-1.5 shadow-[0_0_7px_rgba(0,0,0,0.5)] inset-ring inset-ring-[#e6e6e6]',
        className
      )}
    >
      <div className="flex h-7 shrink-0 justify-between">
        <h2 className="pt-1.5 font-['Open_Sans',sans-serif] text-xs leading-4 whitespace-nowrap">{title}</h2>
        <button type="button" aria-label={`Close ${title}`} className="flex h-[19px] w-[47px] items-center justify-center rounded-b border border-t-0 border-[#909090]">
          <CloseGlyph />
        </button>
      </div>
      <div className="flex grow flex-col border border-[#6a6a6a] bg-[#f0f0f0]">{children}</div>
    </section>
  );
}

function FittingDiagram() {
  const field = 'absolute w-[35px]';
  return (
    <div className="relative mt-0.5 h-[324px] w-[445px] border border-[#fafafa] border-t-[#909090] border-l-[#909090] outline outline-[#fafafa]">
      <svg viewBox="0 0 445 324" className="absolute inset-0 h-[324px] w-[445px]" aria-hidden>
        <defs>
          <linearGradient id="cheek" x1="0.100" y1="0.900" x2="0.800" y2="0.300">
            <stop offset="0" stopColor="#929292" />
            <stop offset="1" stopColor="#c6c6c6" />
          </linearGradient>
          <linearGradient id="inlet" x1="0.500" y1="0.100" x2="0.400" y2="1">
            <stop offset="0" stopColor="#c8c8c8" />
            <stop offset="1" stopColor="#8c8c8c" />
          </linearGradient>
          <linearGradient id="back" gradientUnits="userSpaceOnUse" x1="235" y1="60" x2="330" y2="290">
            <stop offset="0" stopColor="#939393" />
            <stop offset="0.250" stopColor="#b4b4b4" />
            <stop offset="0.450" stopColor="#dcdada" />
            <stop offset="0.750" stopColor="#949494" />
            <stop offset="1" stopColor="#5e5e5e" />
          </linearGradient>
        </defs>
        <path d="M197 68L258 46L307 84C345 118 368 165 368 213V245L314 289Z" fill="url(#back)" stroke="#000" />
        <path d="M197 68L255 123C290 155 314 195 314 243V289H165V249C165 225 150 200 125 180L112 167Z" fill="#c8c8c8" />
        <path d="M197 68L255 123Q272 139 284 161L125 180L112 167Z" fill="url(#cheek)" />
        <path d="M284 161Q314 200 314 243V289H165V271Z" fill="url(#inlet)" />
        <path d="M125 180L284 161L165 271" fill="none" stroke="#8a8a8a" />
        <path d="M197 68L255 123C290 155 314 195 314 243V289H165V249C165 225 150 200 125 180L112 167Z" fill="none" stroke="#000" />
        <g stroke="#000080" fill="#000080">
          <path d="M239 223L187 149M114 257L150 227" />
          <path d="M183 144L194 152L190 154L188 158ZM156 222L150 232L149 228L144 227Z" />
        </g>
        <path d="M42 64L97 43Q103 52 104 64Z" fill="#00f" />
        <path d="M42 64H127M97 43L123 34M97 43Q94 38 91 34" fill="none" stroke="#0000c8" />
        <path d="M86 30L98 35L93 37L90 42Z" fill="#00f" />
      </svg>
      <p className="absolute top-1.5 left-1.5 underline">{'Set offset in inches > 0 to offset down'}</p>
      <TextBox aria-label="Angle" defaultValue="45.00" className="absolute top-10 left-[125px] w-[39px]" />
      <span className="absolute top-[43px] left-[193px]">10"</span>
      <span className="absolute top-[107px] left-[129px]">14"</span>
      <label htmlFor="throat" className="absolute top-[170px] left-6">Throat:</label>
      <TextBox id="throat" defaultValue="2.00" className={clsx(field, 'top-[167px] left-[65px]')} />
      <TextBox aria-label="Offset" defaultValue="0.00" className="absolute top-[227px] left-[230px] w-10" />
      <TextBox aria-label="Radius" defaultValue="16.00" className={clsx(field, 'top-[250px] left-[77px]')} />
      <label htmlFor="inlet-throat" className="absolute top-[281px] left-[50px]">Inlet Throat:</label>
      <TextBox id="inlet-throat" defaultValue="2.00" className={clsx(field, 'top-[278px] left-[115px]')} />
      <span className="absolute top-[295px] left-[209px]">Inlet: 16"</span>
      <span className="absolute top-[265px] left-[357px]">12"</span>
    </div>
  );
}

function CustomizeWindow() {
  return (
    <ToolWindow title="Customize line# 543 Angle-Radius Trans. (Rect.)" className="top-[569px] left-4 w-[669px]">
      <div className="flex gap-1 pt-0.5 pb-5 pl-[3px]">
        <div className="flex w-[183px] flex-col">
          <div className="h-[72px] border border-white px-1.5 pt-1.5 leading-4 outline outline-[#e4e4e4]">
            <p>TakeOff Dimensions:</p>
            <p>16 x 12, 14 x 10</p>
            <p className="mt-[5px] text-center">Item was not customized</p>
          </div>
          <fieldset className="mt-1.5 h-[51px] border border-white border-t-[#dedede] pl-2.5">
            <legend className="-ml-0.5 px-0.5 leading-[14px]">Additional customizations:</legend>
            <div className="mt-[5px] flex items-center gap-1">
              <label htmlFor="gauge">Gauge:</label>
              <Combo id="gauge" value="Std" className="w-20" />
            </div>
          </fieldset>
          <PushButton disabled className="mt-auto ml-[13px] h-[23px] w-[158px] border-[#b4b4b4] from-[#f4f4f4] to-[#f4f4f4] text-[#838383]">
            Undo Changes
          </PushButton>
          <PushButton disabled className="mt-[11px] mb-2 ml-[13px] h-[23px] w-[158px] border-[#b4b4b4] from-[#f4f4f4] to-[#f4f4f4] text-[#838383]">
            Reset to "Standard" defaults
          </PushButton>
        </div>
        <FittingDiagram />
      </div>
    </ToolWindow>
  );
}

function ItemMenuWindow() {
  return (
    <ToolWindow title="Item Mouse Menu" className="top-[69px] left-[1112px] w-[191px]">
      <div className="grid grid-cols-4 border-t-4 border-l-4 border-[#f4f4f4] bg-white pt-px">
        {palette.map(([tone, cells], r) =>
          cells.map((cell, c) => (
            <button
              key={`${r}-${c}`}
              type="button"
              aria-label={cell.startsWith('#') ? cell.slice(1) : undefined}
              className={clsx(
                'flex h-[33px] items-center justify-center overflow-hidden border-r border-b leading-[14px] whitespace-pre',
                tones[tone[c] as Tone]
              )}
            >
              {cell.startsWith('#') ? (
                <svg viewBox="0 0 129 99" className="h-[33px] w-[43px] shrink-0" stroke="#000" strokeWidth="3" aria-hidden>
                  {icons[cell.slice(1)]}
                </svg>
              ) : (
                cell
              )}
            </button>
          ))
        )}
      </div>
      <div role="tablist" className="mt-0.5 flex border-t border-[#a0a0a0]">
        <Tab active>Rect/Rd</Tab>
        <Tab>Oval</Tab>
        <Tab>Other</Tab>
      </div>
    </ToolWindow>
  );
}

function StatusBar() {
  return (
    <footer className="flex h-5 shrink-0 items-center border-t-2 border-[#9a9a9a] bg-[#f0eeee]">
      <div className="flex w-6 justify-center border-r border-[#d4d4d4]">
        <svg viewBox="0 0 17 16" className="h-4 w-[17px]" aria-hidden>
          <path d="M8.500 1L16 15H1Z" fill="#ffd236" stroke="#d8a21c" strokeLinejoin="round" />
          <path d="M7.500 5H9.500L9 10H8ZM7.500 11.500H9.500V13.500H7.500Z" />
        </svg>
      </div>
      <p className="w-60 border-r border-[#d4d4d4] pl-[5px]"><span className="mr-0.5 text-[#3b87d0]">Mode:</span> N/A</p>
      <p className="w-[273px] border-r border-[#d4d4d4] pl-1.5"><span className="mr-0.5 text-[#3b87d0]">Smart Menu:</span> QPI 2011v2 Metric SM</p>
      <button type="button" className="mr-6 ml-auto flex items-center gap-1 text-xs font-bold">
        <svg viewBox="0 0 14 12" className="h-3 w-3.5" aria-hidden>
          <path d="M1 1H13L8.500 6V9L5.500 11V6Z" fill="#b8c4cc" stroke="#000" />
        </svg>
        Filter ON
      </button>
    </footer>
  );
}

export default function App() {
  return (
    <div className="relative flex min-h-screen flex-col bg-[#f0f0f0] font-['Liberation_Sans',Arial,sans-serif] text-[11px] leading-[14px] text-black">
      <svg className="absolute size-0" aria-hidden>
        <defs>
          <linearGradient id="sheet" x1="0" y1="0" x2="1" y2="1">
            <stop offset="0" stopColor="#eeeeee" />
            <stop offset="1" stopColor="#adadad" />
          </linearGradient>
          <linearGradient id="round">
            <stop offset="0" stopColor="#777777" />
            <stop offset="0.450" stopColor="#f2f2f2" />
            <stop offset="1" stopColor="#6a6a6a" />
          </linearGradient>
          <linearGradient id="roundH" x2="0" y2="1">
            <stop offset="0" stopColor="#8a8a8a" />
            <stop offset="0.400" stopColor="#f2f2f2" />
            <stop offset="1" stopColor="#6a6a6a" />
          </linearGradient>
        </defs>
      </svg>
      <TitleBar />
      <nav className="flex h-[21px] shrink-0 items-center gap-3 px-1.5 font-['Open_Sans',sans-serif] text-xs">
        {menus.map((menu) => (
          <button key={menu} type="button">{menu}</button>
        ))}
      </nav>
      <main className="flex border-b-2 border-[#a0a0a0]">
        <div className="w-[456px] shrink-0 border-r border-[#a0a0a0] pt-[3px] pb-4">
          <EntryForm />
          <SizePad />
        </div>
        <div className="ml-0.5 flex grow border-t border-l border-[#a0a0a0] pt-px pl-px">
          <div className="pb-[3px]">
            <LineTable />
          </div>
          <ScrollBar />
        </div>
      </main>
      <div className="grow" />
      <CustomizeWindow />
      <ItemMenuWindow />
      <StatusBar />
    </div>
  );
}
